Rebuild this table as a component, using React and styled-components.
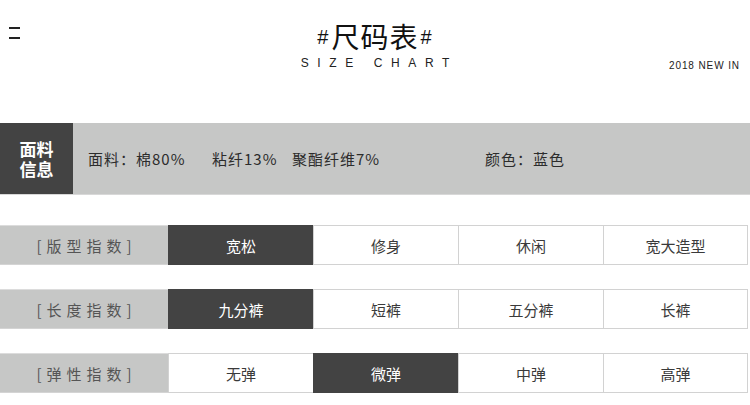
import React from "react";
import styled, { createGlobalStyle } from "styled-components";

const GlobalStyle = createGlobalStyle`
	body {
		margin: 0;
		background: #fff;
		font-family: "Noto Sans CJK SC", "Liberation Sans", sans-serif;
	}
	* {
		box-sizing: border-box;
	}
`;

const rows = [
	{ label: "[版型指数]", items: ["宽松", "修身", "休闲", "宽大造型"], active: 0 },
	{ label: "[长度指数]", items: ["九分裤", "短裤", "五分裤", "长裤"], active: 0 },
	{ label: "[弹性指数]", items: ["无弹", "微弹", "中弹", "高弹"], active: 1 },
];

const fabric = [
	{ text: "面料：棉80%", w: 124 },
	{ text: "粘纤13%", w: 80 },
	{ text: "聚酯纤维7%", w: 193 },
	{ text: "颜色：蓝色" },
];

function App() {
	return (
		<Page>
			<GlobalStyle />
			<Header>
				<MenuIcon>
					<span />
					<span />
				</MenuIcon>
				<TitleBlock>
					<Title>
						<Hash>#</Hash>尺码表<Hash>#</Hash>
					</Title>
					<Subtitle>SIZE CHART</Subtitle>
				</TitleBlock>
				<NewIn>2018 NEW IN</NewIn>
			</Header>

			<FabricRow>
				<FabricLabel>
					<span>面料</span>
					<span>信息</span>
				</FabricLabel>
				<FabricList>
					{fabric.map((f) => (
						<FabricItem key={f.text} $w={f.w}>
							{f.text}
						</FabricItem>
					))}
				</FabricList>
			</FabricRow>

			<Table>
				{rows.map((row) => (
					<Row key={row.label}>
						<RowLabel>{row.label}</RowLabel>
						{row.items.map((item, i) => (
							<Cell key={item} $active={i === row.active}>
								{item}
							</Cell>
						))}
					</Row>
				))}
			</Table>
		</Page>
	);
}

const Page = styled.div`
	width: 750px;
	height: 405px;
	overflow: hidden;
	background: #fff;
`;

const Header = styled.header`
	display: grid;
	grid-template-columns: 1fr auto 1fr;
	height: 123px;
	padding-top: 20px;
`;

const MenuIcon = styled.div`
	display: flex;
	flex-direction: column;
	gap: 8px;
	margin: 7px 0 0 9px;

	span {
		display: block;
		width: 11px;
		height: 2px;
		background: #222;
	}
`;

const TitleBlock = styled.div`
	display: flex;
	flex-direction: column;
	align-items: center;
`;

const Title = styled.h1`
	margin: 0;
	font-size: 28px;
	line-height: 28px;
	font-weight: 400;
	color: #111;
	letter-spacing: 1px;
	display: flex;
	align-items: center;
`;

const Hash = styled.span`
	font-family: "Liberation Sans", sans-serif;
	font-size: 20px;
	margin: 3px 2px 0;
`;

const Subtitle = styled.div`
	margin-top: 5px;
	font-family: "Liberation Sans", sans-serif;
	font-size: 12px;
	line-height: 14px;
	letter-spacing: 8.6px;
	padding-left: 8.6px;
	color: #222;
`;

const NewIn = styled.div`
	justify-self: end;
	margin: 40px 10px 0 0;
	font-family: "Liberation Sans", sans-serif;
	font-size: 10px;
	line-height: 12px;
	letter-spacing: 0.9px;
	color: #222;
	height: 12px;
`;

const FabricRow = styled.section`
	display: grid;
	grid-template-columns: 73px 1fr;
	height: 72px;
	background: #c6c7c6;
	border-bottom: 1px solid #d8d8d8;
`;

const FabricLabel = styled.div`
	background: #434343;
	color: #fff;
	font-size: 17px;
	line-height: 20px;
	font-weight: 700;
	display: flex;
	flex-direction: column;
	align-items: center;
	justify-content: center;
	padding-top: 1px;
`;

const FabricList = styled.div`
	display: flex;
	align-items: center;
	padding-left: 15px;
	padding-bottom: 1px;
`;

const FabricItem = styled.span`
	width: ${(p) => (p.$w ? `${p.$w}px` : "auto")};
	flex: none;
	font-size: 15px;
	letter-spacing: 1px;
	color: #2c2c2c;
	white-space: nowrap;
`;

const Table = styled.div`
	display: flex;
	flex-direction: column;
	gap: 24px;
	margin-top: 30px;
`;

const Row = styled.div`
	display: grid;
	grid-template-columns: 168px repeat(4, 145px);
	height: 40px;
`;

const RowLabel = styled.div`
	background: #c6c7c6;
	border-top: 1px solid #dcdcdc;
	border-bottom: 1px solid #d4d4d4;
	display: flex;
	align-items: center;
	justify-content: center;
	font-size: 15px;
	letter-spacing: 5px;
	padding-left: 5px;
	color: #555;
`;

const Cell = styled.div`
	display: flex;
	align-items: center;
	justify-content: center;
	font-size: 15px;
	background: ${(p) => (p.$active ? "#434343" : "#fff")};
	color: ${(p) => (p.$active ? "#fff" : "#3a3a3a")};
	border: 1px solid ${(p) => (p.$active ? "#434343" : "#d2d2d2")};
	border-right: none;

	&:last-child {
		border-right: 1px solid #d2d2d2;
	}
`;

export default App;
